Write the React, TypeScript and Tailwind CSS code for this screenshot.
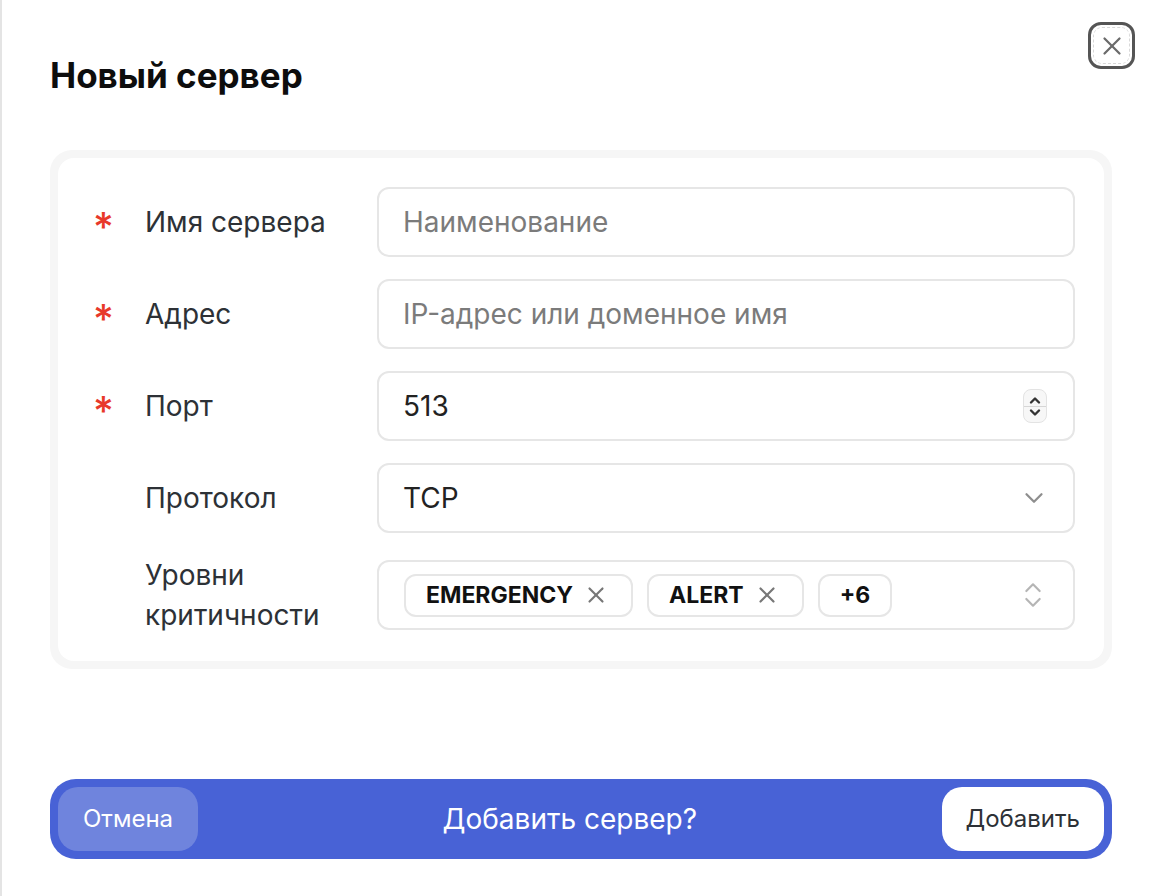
import { ChevronDown, ChevronsUpDown, X } from "lucide-react"

type Row = { label: string[]; required: boolean; kind: "text" | "number" | "select" | "multi"; value?: string; placeholder?: string }

const rows: Row[] = [
  { label: ["Имя сервера"], required: true, kind: "text", placeholder: "Наименование" },
  { label: ["Адрес"], required: true, kind: "text", placeholder: "IP-адрес или доменное имя" },
  { label: ["Порт"], required: true, kind: "number", value: "513" },
  { label: ["Протокол"], required: false, kind: "select", value: "TCP" },
  { label: ["Уровни", "критичности"], required: false, kind: "multi" },
]

function Tag({ text, removable = true }: { text: string; removable?: boolean }) {
  return (
    <span className="flex h-[43px] items-center gap-[10px] rounded-[12px] border-2 border-[#e6e6e6] pr-[22px] pl-[20px] text-[23px] font-bold text-[#111]">
      {text}
      {removable && <X className="h-[26px] w-[26px] text-[#777]" strokeWidth={2} />}
    </span>
  )
}

function Field({ row }: { row: Row }) {
  const box = "flex h-[70px] flex-1 items-center rounded-[12px] border-2 border-[#e6e6e6] bg-white pr-[24px] pl-[24px]"
  if (row.kind === "multi") {
    return (
      <div className={box + " pl-[25px]"}>
        <div className="flex flex-1 items-center gap-[14px]">
          <Tag text="EMERGENCY" />
          <Tag text="ALERT" />
          <span className="flex h-[43px] items-center rounded-[12px] border-2 border-[#e6e6e6] px-[20px] text-[23px] font-bold text-[#111]">
            +6
          </span>
        </div>
        <ChevronsUpDown className="h-[32px] w-[32px] text-[#b5b5b5]" strokeWidth={1.6} />
      </div>
    )
  }
  if (row.kind === "select") {
    return (
      <div className={box}>
        <span className="flex-1 text-[28px] text-[#222]">{row.value}</span>
        <ChevronDown className="h-[30px] w-[30px] text-[#8e8e8e]" strokeWidth={1.8} />
      </div>
    )
  }
  if (row.kind === "number") {
    return (
      <div className={box}>
        <span className="flex-1 text-[28px] text-[#222]">{row.value}</span>
        <div className="mr-[2px] flex h-[34px] w-[24px] flex-col items-center justify-center rounded-[8px] border border-[#e3e3e3] bg-[#f7f7f7]">
          <svg width="14" height="9" viewBox="0 0 14 9" fill="none" stroke="#333" strokeWidth="2.4" strokeLinecap="round" strokeLinejoin="round">
            <path d="M3 6.5 7 2.5l4 4" />
          </svg>
          <div className="my-[1px] h-px w-full bg-[#d6d6d6]" />
          <svg width="14" height="9" viewBox="0 0 14 9" fill="none" stroke="#333" strokeWidth="2.4" strokeLinecap="round" strokeLinejoin="round">
            <path d="M3 2.5 7 6.5l4-4" />
          </svg>
        </div>
      </div>
    )
  }
  return (
    <div className={box}>
      <span className="flex-1 text-[28px] text-[#7b7b7b]">{row.placeholder}</span>
    </div>
  )
}

export default function App() {
  return (
    <div className="flex h-[896px] w-[1158px] bg-white font-['Inter',_'Noto_Sans',_sans-serif]">
      {/* left edge of the drawer */}
      <div className="w-[2px] bg-[#e4e4e4]" />

      <div className="flex flex-1 flex-col pr-[46px] pl-[48px]">
        {/* Header */}
        <div className="flex items-start justify-between pt-[22px]">
          <h1 className="pt-[33px] text-[35px] leading-[40px] font-bold text-[#0d0d0d]">Новый сервер</h1>
          <button className="-mr-[23px] flex h-[47px] w-[47px] items-center justify-center rounded-[13px] border-[3px] border-[#555]">
            <span className="flex h-[37px] w-[37px] items-center justify-center rounded-[9px] border border-dashed border-[#d8d8d8]">
              <X className="h-[30px] w-[30px] text-[#6b6b6b]" strokeWidth={1.8} />
            </span>
          </button>
        </div>

        {/* Form card */}
        <div className="mt-[55px] rounded-[22px] bg-[#f6f6f6] p-[8px]">
          <div className="flex flex-col gap-[22px] rounded-[16px] bg-white pt-[29px] pr-[29px] pb-[26px] pl-[35px]">
            {rows.map((row) => (
              <div key={row.label.join(" ")} className="flex items-center">
                <span className="w-[52px] pt-[10px] text-[40px] leading-none font-medium text-[#e8392a]">
                  {row.required ? "*" : ""}
                </span>
                <div className="w-[232px] text-[28px] leading-[40px] text-[#2d3136]">
                  {row.label.map((l) => (
                    <div key={l}>{l}</div>
                  ))}
                </div>
                <Field row={row} />
              </div>
            ))}
          </div>
        </div>

        {/* Confirm bar */}
        <div className="mt-[110px] flex h-[80px] items-center justify-between rounded-[26px] bg-[#4862d6] p-[8px]">
          <button className="h-[64px] rounded-[20px] bg-[#6f84dd] px-[25px] text-[24px] text-white">Отмена</button>
          <span className="text-[28px] text-white">Добавить сервер?</span>
          <button className="h-[64px] rounded-[20px] bg-white px-[24px] text-[24px] text-[#2d3136]">Добавить</button>
        </div>
      </div>
    </div>
  )
}
